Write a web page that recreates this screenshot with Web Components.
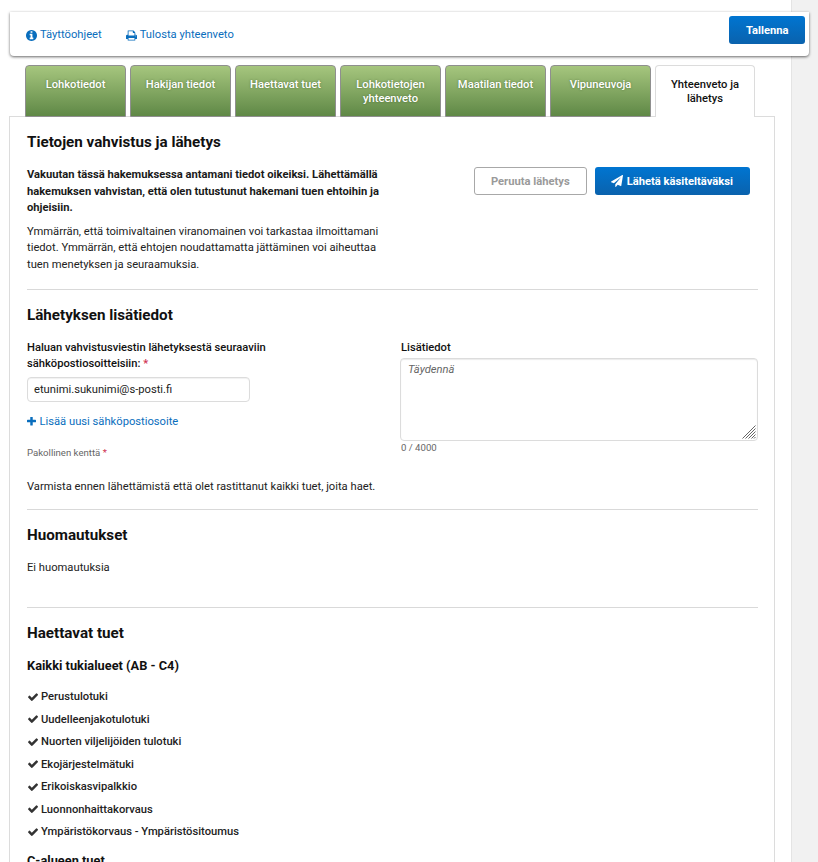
<!DOCTYPE html>
<html lang="fi">
<head>
<meta charset="utf-8">
<title>Yhteenveto ja lähetys</title>
<style>
  html, body { margin: 0; height: 862px; overflow: hidden; background: #fff; }
  body { font-family: Roboto, "Liberation Sans", sans-serif; color: #151515; }
</style>
</head>
<body>
<app-page></app-page>

<script>
const ICONS = {
  info: '<svg width="11" height="11" viewBox="128 128 1536 1536"><path fill="#0a6ebd" d="M1152 1376v-160q0-14-9-23t-23-9h-96v-512q0-14-9-23t-23-9h-320q-14 0-23 9t-9 23v160q0 14 9 23t23 9h96v320h-96q-14 0-23 9t-9 23v160q0 14 9 23t23 9h448q14 0 23-9t9-23zm-128-896v-160q0-14-9-23t-23-9h-192q-14 0-23 9t-9 23v160q0 14 9 23t23 9h192q14 0 23-9t9-23zm640 416q0 209-103 385.500t-279.500 279.500-385.500 103-385.500-103-279.500-279.500-103-385.500 103-385.500 279.500-279.500 385.500-103 385.500 103 279.500 279.500 103 385.500z"/></svg>',
  print: '<svg width="11" height="11" viewBox="64 64 1664 1664"><path fill="#0a6ebd" d="M448 1536h896v-256h-896v256zm0-640h896v-384h-160q-40 0-68-28t-28-68v-160h-640v640zm1152 64q0-26-19-45t-45-19-45 19-19 45 19 45 45 19 45-19 19-45zm128 0v416q0 13-9.500 22.500t-22.500 9.500h-224v160q0 40-28 68t-68 28h-960q-40 0-68-28t-28-68v-160h-224q-13 0-22.500-9.500t-9.500-22.500v-416q0-79 56.500-135.500t135.500-56.500h64v-544q0-40 28-68t68-28h672q40 0 88 20t76 48l152 152q28 28 48 76t20 88v256h64q79 0 135.500 56.500t56.500 135.500z"/></svg>',
  plus: '<svg width="9" height="9" viewBox="192 192 1408 1408"><path fill="#0a6ebd" d="M1600 736v192q0 40-28 68t-68 28h-416v416q0 40-28 68t-68 28h-192q-40 0-68-28t-28-68v-416h-416q-40 0-68-28t-28-68v-192q0-40 28-68t68-28h416v-416q0-40 28-68t68-28h192q40 0 68 28t28 68v416h416q40 0 68 28t28 68z"/></svg>',
  plane: '<svg width="12" height="12" viewBox="0 0 1792 1792"><path fill="#fff" d="M1764 11q33 24 27 64l-256 1536q-5 29-32 45-14 8-31 8-11 0-24-5l-453-185-242 295q-18 23-49 23-13 0-22-4-19-7-30.500-23.500t-11.500-36.500v-349l864-1059-1069 925-395-162q-37-14-40-55-2-40 32-59l1664-960q15-9 32-9 20 0 36 11z"/></svg>',
  check: '<svg width="10" height="8" viewBox="121 330 1550 1160"><path fill="#333" d="M1671 566q0 40-28 68l-724 724-136 136q-28 28-68 28t-68-28l-136-136-362-362q-28-28-28-68t28-68l136-136q28-28 68-28t68 28l294 295 656-657q28-28 68-28t68 28l136 136q28 28 28 68z"/></svg>'
};

class AppPage extends HTMLElement {
  constructor() {
    super();
    this.attachShadow({ mode: 'open' });
    this.shadowRoot.innerHTML = `
      <style>
        :host { display: flex; width: 818px; height: 862px; overflow: hidden; font-size: 11.200px; }
        main { width: 791px; flex: none; padding-top: 12px; box-sizing: border-box; }
        aside { flex: 1; background: #f1f1f1; border-left: 1px solid #e4e4e4; }
        .panel {
          width: 766px; margin-left: 9px; box-sizing: border-box;
          border: 1px solid #dcdcdc; border-bottom: 0; padding: 0 16px 0 17px; height: 770px;
        }
        h2 { font-size: 15.200px; font-weight: 700; margin: 0; color: #111; line-height: 20px; }
        h3 { font-size: 12.800px; font-weight: 700; margin: 0; color: #111; line-height: 18px; }
        hr { border: 0; border-top: 1px solid #d9d9d9; margin: 0; }
        p { margin: 0; font-size: 11.200px; line-height: 16.500px; color: #222; }
        .confirm { display: flex; justify-content: space-between; padding-top: 15px; }
        .confirm .text { width: 356px; }
        .confirm h2 { margin-bottom: 15px; }
        .confirm b { display: block; font-size: 11.200px; line-height: 16.500px; margin-bottom: 7px; color: #1a1a1a; }
        .actions { display: flex; gap: 8px; margin: 35px 8px 0 0; align-self: flex-start; }
        .details { padding-top: 15px; }
        .cols { display: grid; grid-template-columns: 374px 357px; margin-top: 15px; }
        label { display: block; font-size: 11.200px; font-weight: 500; line-height: 15.600px; color: #111; }
        label span { display: block; }
        label i, .req i { font-style: normal; color: #d0324f; }
        .mail {
          display: block; width: 223px; height: 25px; box-sizing: border-box; margin-top: 6px;
          border: 1px solid #dcdcdc; border-radius: 4px; padding: 0 6px;
          box-shadow: inset 0 1px 1px rgba(0,0,0,.06);
          font-size: 11.200px; line-height: 23px; color: #222;
        }
        .add { display: flex; align-items: center; gap: 3.500px; margin-top: 12px; font-size: 11.200px; line-height: 15px; color: #0a6ebd; }
        .req { font-size: 9.600px; line-height: 14px; color: #666; margin-top: 17px; }
        .area {
          position: relative; height: 83px; box-sizing: border-box; margin: 2px 0 0 -1px;
          border: 1px solid #dcdcdc; border-radius: 4px; padding: 3px 7px;
          box-shadow: inset 0 1px 1px rgba(0,0,0,.08);
          font-size: 11.200px; line-height: 15px; font-style: italic; color: #666;
        }
        .grip { position: absolute; right: 1px; bottom: 1px; }
        .count { font-size: 9.600px; line-height: 14px; color: #666; }
        .verify { margin: 19px 0 13px; }
        .notes { padding-top: 15px; }
        .notes p { margin: 15px 0 31px; }
        .tuet { padding-top: 15px; }
        .tuet h3 { margin: 14px 0 10.100px; }
        .tuet ul + h3 { margin-top: 9px; }
        ul { list-style: none; margin: 0; padding: 0 0 0 1px; }
        li { display: flex; align-items: center; gap: 3px; height: 22.500px; font-size: 11.200px; font-weight: 500; color: #222; }
      </style>
      <main>
        <app-toolbar></app-toolbar>
        <app-tabs></app-tabs>
        <section class="panel">
          <div class="confirm">
            <div class="text">
              <h2>Tietojen vahvistus ja lähetys</h2>
              <b>Vakuutan tässä hakemuksessa antamani tiedot oikeiksi. Lähettämällä hakemuksen vahvistan, että olen tutustunut hakemani tuen ehtoihin ja ohjeisiin.</b>
              <p>Ymmärrän, että toimivaltainen viranomainen voi tarkastaa ilmoittamani tiedot. Ymmärrän, että ehtojen noudattamatta jättäminen voi aiheuttaa tuen menetyksen ja seuraamuksia.</p>
            </div>
            <div class="actions">
              <app-button kind="outline">Peruuta lähetys</app-button>
              <app-button kind="primary" icon="plane" style="padding:0 17px 0 16px">Lähetä käsiteltäväksi</app-button>
            </div>
          </div>
          <hr style="margin-top:16px">
          <div class="details">
            <h2>Lähetyksen lisätiedot</h2>
            <div class="cols">
              <div class="left">
                <label><span>Haluan vahvistusviestin lähetyksestä seuraaviin</span><span>sähköpostiosoitteisiin: <i>*</i></span></label>
                <span class="mail">etunimi.sukunimi@s-posti.fi</span>
                <div class="add">${ICONS.plus}<span>Lisää uusi sähköpostiosoite</span></div>
                <div class="req">Pakollinen kenttä <i>*</i></div>
              </div>
              <div class="right">
                <label>Lisätiedot</label>
                <div class="area">Täydennä
                  <svg class="grip" width="14" height="14" viewBox="0 0 14 14"><path d="M13.500 .5 .5 13.500M13.500 3.500l-10 10M13.500 6.500l-7 7M13.500 9.500l-4 4M13.500 12l-1.500 1.500" stroke="#666" stroke-width="1" fill="none"/></svg>
                </div>
                <div class="count">0 / 4000</div>
              </div>
            </div>
            <p class="verify">Varmista ennen lähettämistä että olet rastittanut kaikki tuet, joita haet.</p>
          </div>
          <hr>
          <div class="notes">
            <h2>Huomautukset</h2>
            <p>Ei huomautuksia</p>
          </div>
          <hr>
          <div class="tuet">
            <h2>Haettavat tuet</h2>
            <h3>Kaikki tukialueet (AB - C4)</h3>
            <ul>
              <li>${ICONS.check}Perustulotuki</li>
              <li>${ICONS.check}Uudelleenjakotulotuki</li>
              <li>${ICONS.check}Nuorten viljelijöiden tulotuki</li>
              <li>${ICONS.check}Ekojärjestelmätuki</li>
              <li>${ICONS.check}Erikoiskasvipalkkio</li>
              <li>${ICONS.check}Luonnonhaittakorvaus</li>
              <li>${ICONS.check}Ympäristökorvaus - Ympäristösitoumus</li>
            </ul>
            <h3>C-alueen tuet</h3>
          </div>
        </section>
      </main>
      <aside></aside>
    `;
  }
}

class AppToolbar extends HTMLElement {
  constructor() {
    super();
    this.attachShadow({ mode: 'open' });
    this.shadowRoot.innerHTML = `
      <style>
        :host {
          display: flex; align-items: flex-start; justify-content: space-between; box-sizing: border-box;
          width: 799px; height: 44px; margin-left: 10px; padding: 4px 4px 0 16px; background: #fff;
          border-radius: 0 0 4px 4px;
          box-shadow: 0 1px 3px rgba(0,0,0,.6);
          position: relative;
        }
        nav { display: flex; gap: 24px; margin-top: 12px; }
        a { display: flex; align-items: center; gap: 3px; font-size: 11.200px; line-height: 14px; color: #0a6ebd; }
      </style>
      <nav>
        <a>${ICONS.info}<span>Täyttöohjeet</span></a>
        <a>${ICONS.print}<span>Tulosta yhteenveto</span></a>
      </nav>
      <app-button kind="primary" style="padding:0 16.500px">Tallenna</app-button>
    `;
  }
}

class AppTabs extends HTMLElement {
  constructor() {
    super();
    this.attachShadow({ mode: 'open' });
    const labels = ['Lohkotiedot', 'Hakijan tiedot', 'Haettavat tuet', 'Lohkotietojen yhteenveto', 'Maatilan tiedot', 'Vipuneuvoja', 'Yhteenveto ja lähetys'];
    this.shadowRoot.innerHTML = `
      <style>
        :host { display: flex; gap: 4px; margin: 9px 0 -1px 25px; position: relative; z-index: 1; height: 52px; }
        .tab {
          width: 101px; height: 52px; box-sizing: border-box; padding: 12px 6px 0; text-align: center;
          font-size: 11.200px; font-weight: 500; line-height: 14px; color: #fff;
          text-shadow: 0 0 2px rgba(60,90,40,.7);
          border: 1px solid #8f8f8f; border-radius: 4px 4px 0 0;
          background: linear-gradient(#a6c67e, #5f8846);
        }
        .tab.on {
          width: 100px; background: #fff; color: #111; text-shadow: none; border-color: #dcdcdc; border-bottom: 0;
        }
      </style>
      ${labels.map((l, i) => `<div class="tab${i === labels.length - 1 ? ' on' : ''}">${l}</div>`).join('')}
    `;
  }
}

class AppButton extends HTMLElement {
  constructor() {
    super();
    this.attachShadow({ mode: 'open' });
  }
  connectedCallback() {
    const icon = this.getAttribute('icon');
    this.shadowRoot.innerHTML = `
      <style>
        :host { display: inline-flex; align-items: center; justify-content: center; gap: 4px; height: 28px; box-sizing: border-box; border-radius: 3px; font-size: 11.200px; font-weight: 700; white-space: nowrap; }
        :host([kind=primary]) { background: linear-gradient(#0075d1, #0a62ad); color: #fff; padding: 0 17px; }
        :host([kind=outline]) { background: #fff; border: 1px solid #a8a8a8; color: #9a9a9a; padding: 0 16px; }
      </style>
      ${icon ? ICONS[icon] : ''}<slot></slot>
    `;
  }
}

customElements.define('app-button', AppButton);
customElements.define('app-tabs', AppTabs);
customElements.define('app-toolbar', AppToolbar);
customElements.define('app-page', AppPage);
</script>
</body>
</html>
